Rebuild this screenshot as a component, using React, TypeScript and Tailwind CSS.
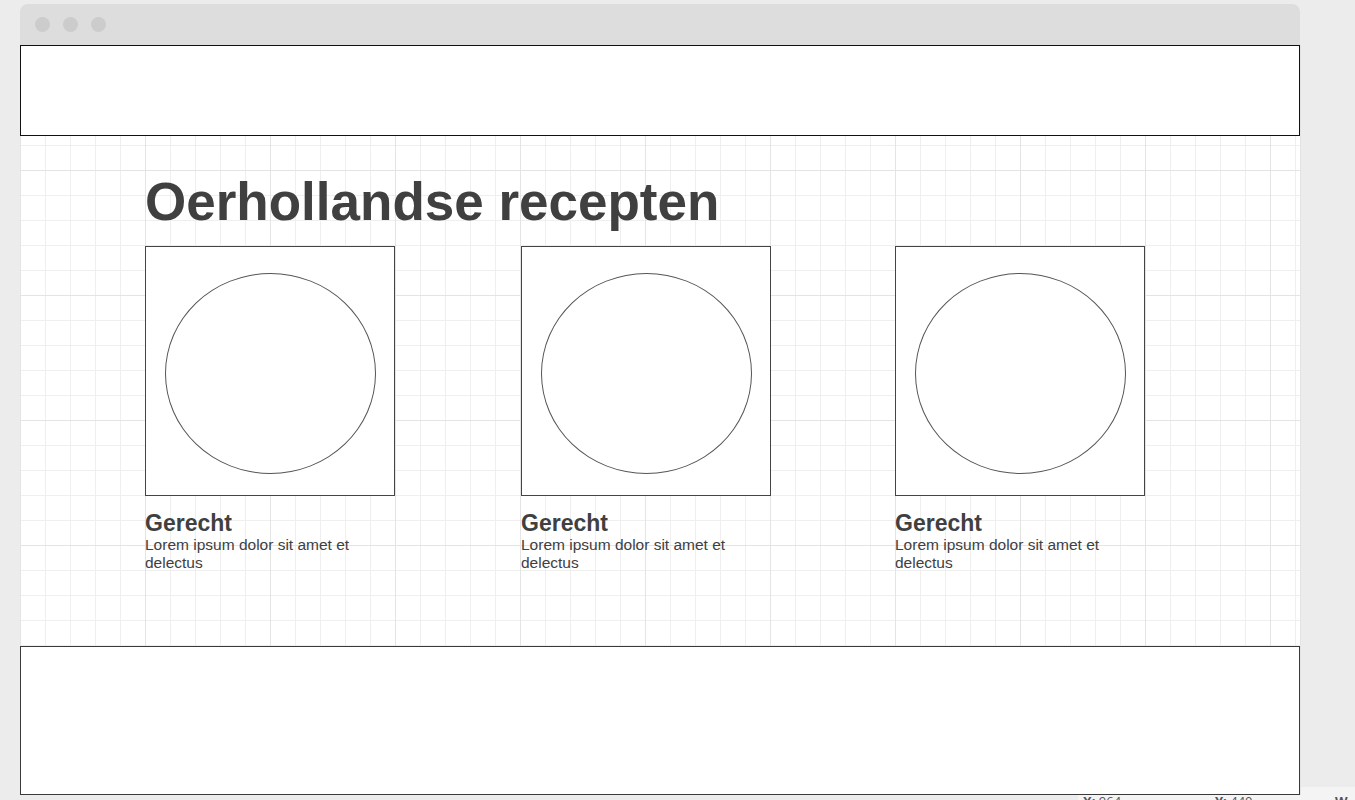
import React from "react";

function Card({ className = "" }: { className?: string }) {
  return (
    <div className={"w-[250px] flex flex-col " + className}>
      <div className="w-[250px] h-[250px] border border-[#444444] bg-white pl-[19px] pt-[26px]">
        <div className="w-[211px] h-[201px] rounded-[50%] border border-[#555555]" />
      </div>
      <div className="mt-[14px] text-[23px] leading-[1.15] font-bold text-[#404040]">Gerecht</div>
      <div className="text-[15.5px] leading-[18px] text-[#404040]">Lorem ipsum dolor sit amet et delectus</div>
    </div>
  );
}

export default function App() {
  return (
    <div className="relative w-[1355px] h-[800px] overflow-hidden bg-[#ececec] font-['Liberation_Sans',Arial,sans-serif]">
      <div className="absolute left-[1078px] top-[787px] w-[277px] h-[13px] bg-[#f4f4f4] z-0">
        <span className="absolute left-[5px] top-[7px] text-[13px] leading-[15px] text-[#555555] font-['Open_Sans',sans-serif]"><b>X:</b> 964 <span className="text-[10px]">px</span></span>
        <span className="absolute left-[137px] top-[7px] text-[13px] leading-[15px] text-[#555555] font-['Open_Sans',sans-serif]"><b>Y:</b> 440 <span className="text-[10px]">px</span></span>
        <span className="absolute left-[257px] top-[7px] text-[13px] leading-[15px] text-[#555555] font-['Open_Sans',sans-serif]"><b>W</b></span>
      </div>
      <div className="relative z-10 ml-[20px] pt-[4px] w-[1280px]">
        <div className="h-[41px] bg-[#dddddd] rounded-t-[8px] flex items-center pl-[15px] gap-[13px]">
          <div className="w-[15px] h-[15px] rounded-full bg-[#cccccc]" />
          <div className="w-[15px] h-[15px] rounded-full bg-[#cccccc]" />
          <div className="w-[15px] h-[15px] rounded-full bg-[#cccccc]" />
        </div>
        <div className="flex flex-col bg-white shadow-[1px_0_0_#e3e3e3] [background-image:linear-gradient(to_right,#e4e4e4_1px,transparent_1px),linear-gradient(to_bottom,#e4e4e4_1px,transparent_1px),linear-gradient(to_right,#efefef_1px,transparent_1px),linear-gradient(to_bottom,#efefef_1px,transparent_1px)] [background-size:125px_125px,125px_125px,25px_25px,25px_25px]">
          <div className="h-[91px] border border-[#111111] bg-white" />
          <div className="h-[510px] pl-[125px] pt-[36px]">
            <h1 className="text-[53px] leading-[60px] font-bold text-[#404040]">Oerhollandse recepten</h1>
            <div className="mt-[14px] flex">
              <Card />
              <Card className="ml-[126px]" />
              <Card className="ml-[124px]" />
            </div>
          </div>
          <div className="h-[149px] border border-[#3a3a3a] bg-white" />
        </div>
      </div>
    </div>
  );
}
